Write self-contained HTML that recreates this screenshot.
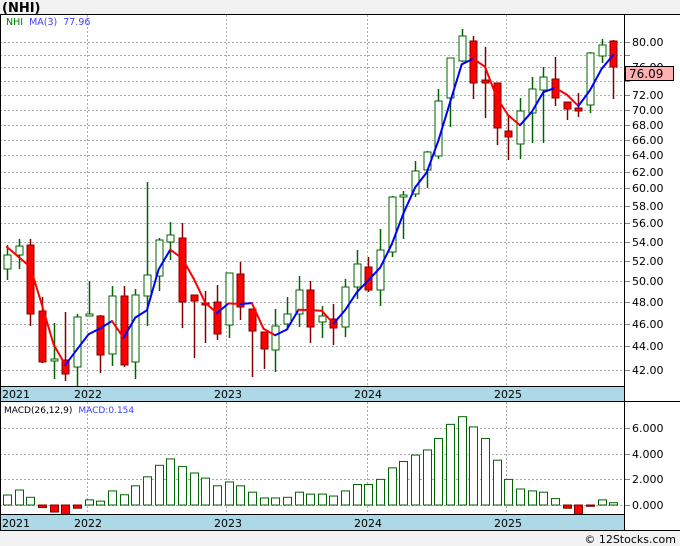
<!DOCTYPE html>
<html><head><meta charset="utf-8"><style>
body{margin:0;width:680px;height:546px;overflow:hidden;background:#f2f2f2;font-family:"Liberation Sans",sans-serif}
svg{position:absolute;left:0;top:0}
text{font-family:"DejaVu Sans","Liberation Sans",sans-serif}
</style></head><body>
<svg id="s" width="680" height="546" xmlns="http://www.w3.org/2000/svg">
<rect x="0" y="14" width="680" height="516" fill="#fff"/>
<g id="grid"></g>
<g id="cs"></g>
<rect x="0" y="387" width="624" height="14" fill="#add8e6"/>
<rect x="0" y="515" width="624" height="15" fill="#add8e6"/>
<line x1="0" y1="14.5" x2="680" y2="14.5" stroke="#000"/>
<line x1="0" y1="386.5" x2="624" y2="386.5" stroke="#000"/>
<line x1="0" y1="401.5" x2="680" y2="401.5" stroke="#000"/>
<line x1="0" y1="514.5" x2="624" y2="514.5" stroke="#000"/>
<line x1="0" y1="530.5" x2="680" y2="530.5" stroke="#000"/>
<line x1="0.5" y1="14" x2="0.5" y2="530" stroke="#000"/>
<line x1="624.5" y1="14" x2="624.5" y2="530" stroke="#000"/>
<g font-size="11" fill="#000">
<text x="2" y="398">2021</text><text x="74" y="398">2022</text><text x="214" y="398">2023</text><text x="354" y="398">2024</text><text x="494" y="398">2025</text>
<text x="2" y="527">2021</text><text x="74" y="527">2022</text><text x="214" y="527">2023</text><text x="354" y="527">2024</text><text x="494" y="527">2025</text>
</g>
<g font-size="11" fill="#000" id="pl">
<text x="632" y="46">80.00</text><text x="632" y="71">76.00</text><text x="632" y="99">72.00</text><text x="632" y="114">70.00</text><text x="632" y="129">68.00</text><text x="632" y="144">66.00</text><text x="632" y="159">64.00</text><text x="632" y="176">62.00</text><text x="632" y="192">60.00</text><text x="632" y="210">58.00</text><text x="632" y="227">56.00</text><text x="632" y="246">54.00</text><text x="632" y="265">52.00</text><text x="632" y="285">50.00</text><text x="632" y="306">48.00</text><text x="632" y="328">46.00</text><text x="632" y="350">44.00</text><text x="632" y="374">42.00</text>
<text x="632" y="432">6.000</text><text x="632" y="458">4.000</text><text x="632" y="483">2.000</text><text x="632" y="509">0.000</text>
</g>
<rect x="625.5" y="66.5" width="48" height="14" fill="#ffb0b0" stroke="#000"/>
<text x="629" y="78" font-size="12" fill="#000">76.09</text>
<text x="2" y="12" font-size="13" font-weight="bold" fill="#000">(NHI)</text>
<text x="6" y="25" font-size="9.5"><tspan fill="#008000">NHI</tspan><tspan fill="#4040ff" dx="6">MA(3)</tspan><tspan fill="#4040ff" dx="6">77.96</tspan></text>
<text x="4" y="413" font-size="9"><tspan fill="#000">MACD(26,12,9)</tspan><tspan fill="#4040ff" dx="6">MACD:0.154</tspan></text>
<text x="676" y="543" font-size="11" fill="#000" text-anchor="end">© 12Stocks.com</text>
</svg>
<script>
var NS="http://www.w3.org/2000/svg";
function el(p,t,a){var e=document.createElementNS(NS,t);for(var k in a)e.setAttribute(k,a[k]);p.appendChild(e);return e;}
var g=document.getElementById('grid'),cs=document.getElementById('cs');
var ys=[42,55,67,81,95,110,125,140,155,172,188,206,223,242,261,281,302,324,346,370];
ys.forEach(function(y){el(g,'line',{x1:0,y1:y+.5,x2:624,y2:y+.5,stroke:'#aaa','stroke-dasharray':'2,2'});el(g,'line',{x1:624,y1:y+.5,x2:630,y2:y+.5,stroke:'#888'});});
[428,454,479,505].forEach(function(y){el(g,'line',{x1:0,y1:y+.5,x2:624,y2:y+.5,stroke:'#aaa','stroke-dasharray':'2,2'});el(g,'line',{x1:624,y1:y+.5,x2:630,y2:y+.5,stroke:'#888'});});
[87,226,367,506].forEach(function(x){el(g,'line',{x1:x+.5,y1:15,x2:x+.5,y2:386,stroke:'#aaa','stroke-dasharray':'2,2'});el(g,'line',{x1:x+.5,y1:402,x2:x+.5,y2:514,stroke:'#aaa','stroke-dasharray':'2,2'});});
var C=[[255,269,245,280,1],[246,255,239,269,1],[245,314,239,326,0],[311,362,297,363,0],[359,361,323,379,1],[360,374,312,381,0],[317,367,314,387,1],[314,316,281,316,1],[316,355,315,373,0],[296,354,286,366,1],[296,365,286,367,0],[295,362,289,379,1],[275,296,182,326,1],[240,276,238,291,1],[235,242,222,260,1],[238,302,223,328,0],[295,301,295,358,0],[303,305,291,343,0],[302,334,285,340,0],[273,325,273,338,1],[274,307,262,320,0],[309,331,309,377,0],[332,349,332,369,0],[326,350,309,372,1],[314,324,297,330,1],[290,314,276,327,1],[290,327,281,343,0],[316,322,306,338,1],[319,328,304,345,0],[287,327,279,337,1],[264,287,250,299,1],[267,290,257,292,0],[250,290,229,306,1],[197,252,196,257,1],[195,197,191,239,1],[171,194,161,197,1],[152,170,151,188,1],[101,156,89,159,1],[58,98,58,127,1],[36,61,29,62,1],[41,83,36,99,0],[80,83,47,118,0],[83,128,83,145,0],[131,137,115,160,0],[111,144,98,159,1],[89,113,77,143,1],[77,90,67,143,1],[79,98,57,106,0],[102,109,102,120,0],[108,111,93,117,0],[53,105,52,113,1],[45,56,39,63,1],[41,67,40,99,0]];
var M=[0.78,1.17,0.6,-0.2,-0.55,-0.9,-0.25,0.4,0.3,1.1,0.8,1.5,2.2,3.1,3.6,3.0,2.5,2.1,1.5,1.8,1.5,1.0,0.55,0.55,0.6,1.0,0.85,0.85,0.7,1.1,1.6,1.6,2.0,2.9,3.4,3.9,4.3,5.2,6.3,6.9,6.1,5.2,3.5,2.0,1.25,1.1,1.0,0.5,-0.25,-0.8,-0.1,0.4,0.18];
function X(i){return 7+i*11.66;}
function P(y){return 80*Math.exp(-(y-42)/509);}
function Y(p){return 42+(Math.log(80)-Math.log(p))*509;}
var closes=C.map(function(c){return P(c[4]?c[0]:c[1]);});
C.forEach(function(c,i){var x=Math.round(X(i));
 var col=c[4]?'#006400':'#800000';
 el(cs,'line',{x1:x+.5,y1:c[2],x2:x+.5,y2:c[3],stroke:col,'stroke-width':1.5});
 var h=Math.max(c[1]-c[0],2);
 el(cs,'rect',{x:x-3,y:c[0],width:7,height:h,fill:c[4]?'#fff':'#f00',stroke:col,'stroke-width':1});
});
var ma=[247,257,267];
for(var i=3;i<C.length;i++){ma.push(Y((closes[i-2]+closes[i-1]+closes[i])/3));}
for(var i=1;i<ma.length;i++){
 el(cs,'line',{x1:X(i-1),y1:ma[i-1],x2:X(i),y2:ma[i],stroke:ma[i]<=ma[i-1]?'#0000ff':'#ff0000','stroke-width':2,'stroke-linecap':'round'});
}
M.forEach(function(v,i){var x=Math.round(X(i));var y=505-v*12.8;
 var top=Math.min(y,505),h=Math.min(Math.abs(v*12.8),v<0?10:999);
 el(cs,'rect',{x:x-3.5,y:v>=0?top:505,width:8,height:Math.max(h,1),fill:v>=0?'#fff':(i==50?'#800000':'#f00'),stroke:v>=0?'#006400':'#800000','stroke-width':1});
});
</script>
</body></html>
